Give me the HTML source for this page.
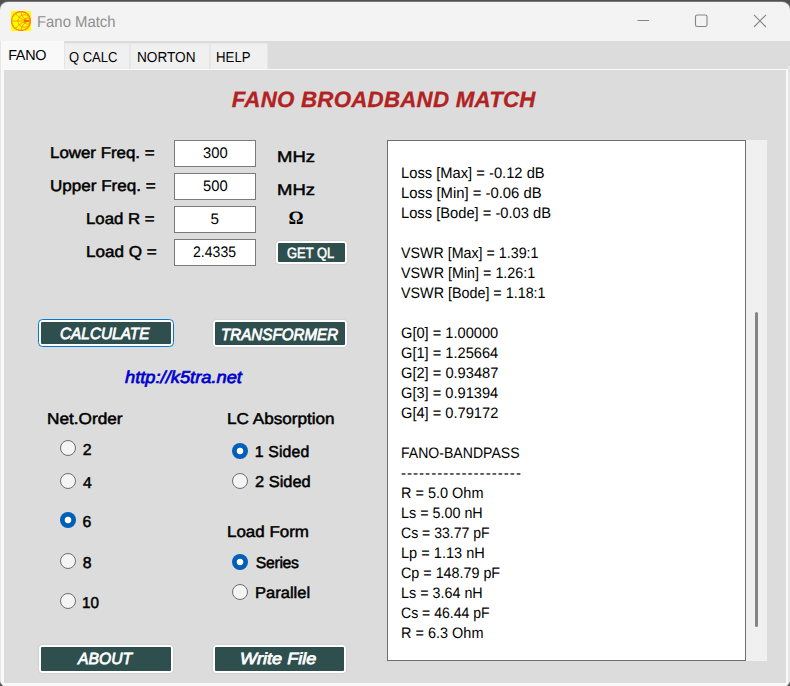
<!DOCTYPE html>
<html lang="en"><head><meta charset="utf-8"><title>Fano Match</title>
<style>
*{box-sizing:border-box;margin:0;padding:0}
html,body{width:790px;height:686px;overflow:hidden;background:#505050}
body{position:relative;font-family:"Liberation Sans",Arial,sans-serif;color:#000}
.abs{position:absolute}
.t{position:absolute;white-space:nowrap;line-height:20px;display:block;transform-origin:0 50%;text-rendering:geometricPrecision}
#clip{position:absolute;left:0;top:1.5px;width:790px;height:685.5px;border-radius:8px;background:#f3f3f3;overflow:hidden;box-shadow:0 0 0 1px #787878}
#inner{position:absolute;left:0;top:-1.5px;width:790px;height:686px}
#strip{left:0;top:41px;width:790px;height:645px;background:#dcdcdc;border-left:1px solid #e6e6e6}
#frame{left:1px;top:68.5px;width:787px;height:617.5px;background:#dcdcdc;border:solid #f9f9f9;border-width:1.5px 2px 3px 3px}
#rstrip{left:788px;top:66px;width:2px;height:620px;background:#e6e6e6}
.tab{position:absolute;top:43px;height:25.5px;background:#f0f0f0;border:1px solid #e6e6e6;border-bottom:none}
#tab0{left:0.5px;top:41px;width:63px;height:29px;background:#f9f9f9;border:none}
.inp{position:absolute;left:174px;width:82px;height:27px;background:#fff;border:1px solid #7a7a7a}
.btn{position:absolute;background:#fff;border-radius:3.5px;box-shadow:0 0 1.5px rgba(0,0,0,.22)}
.btn::after{content:'';position:absolute;left:2px;top:2px;right:2px;bottom:2px;background:#2f4f4f;border-radius:1px}
.btn.foc{border:1px solid #0078d4;border-radius:4.5px;box-shadow:none}
.rad{position:absolute;width:16px;height:16px;border-radius:50%;background:#f4f4f4;border:1px solid #6e6e6e}
.rad.on{border:none;background:radial-gradient(circle at 50% 50%,#fff 0,#fff 2.9px,#005fb8 3.7px)}
#tbox{left:387px;top:140px;width:359px;height:521px;background:#fff;border:1px solid #6e6e6e}
#sbar{left:746px;top:140px;width:21px;height:521px;background:#f0f0f0}
#thumb{left:755px;top:312px;width:3px;height:314.5px;background:#858585;border-radius:1.5px}
</style></head><body>
<div id="clip"><div id="inner">
<div id="strip" class="abs"></div>
<div id="frame" class="abs"></div>
<div id="rstrip" class="abs"></div>
<div class="tab" style="left:63.5px;width:66px"></div>
<div class="tab" style="left:129.5px;width:80px"></div>
<div class="tab" style="left:209.5px;width:58.5px"></div>
<div class="tab" id="tab0"></div>
<!-- app icon -->
<svg class="abs" style="left:11px;top:11px" width="20" height="20" viewBox="0 0 20 20">
<rect width="20" height="20" fill="#ffff00"/>
<g fill="none" stroke="#ff9000" stroke-width="1" stroke-opacity="0.9">
<circle cx="10" cy="10" r="9.5" stroke-width="1.3" stroke="#ff8a00" stroke-opacity="1"/>
<circle cx="13.2" cy="10" r="6.3"/>
<circle cx="16.3" cy="10" r="3.2"/>
<path d="M0.5 10H19.5"/>
<path d="M19.5 10A9.5 9.5 0 0 1 10 0.5"/>
<path d="M19.5 10A9.5 9.5 0 0 0 10 19.5"/>
<path d="M19.5 10A19 19 0 0 1 4.3 2.4"/>
<path d="M19.5 10A19 19 0 0 0 4.3 17.6"/>
<path d="M13.2 10H18.4" stroke="#ff5a00" stroke-width="1.7" stroke-opacity="1"/>
</g></svg>
<!-- caption buttons -->
<svg class="abs" style="left:630px;top:8px" width="150" height="26" viewBox="0 0 150 26" fill="none" stroke="#858585" stroke-width="1.1">
<path d="M7.5 12.5H19"/>
<rect x="65.5" y="7" width="11.5" height="11.5" rx="1.8"/>
<path d="M124 6.8L136 19M136 6.8L124 19"/>
</svg>
<!-- inputs -->
<div class="inp" style="top:140px"></div>
<div class="inp" style="top:173px"></div>
<div class="inp" style="top:206px"></div>
<div class="inp" style="top:239px"></div>
<!-- buttons -->
<div class="btn" style="left:276px;top:241px;width:71px;height:23px"></div>
<div class="btn foc" style="left:38px;top:319px;width:136px;height:28px"></div>
<div class="btn" style="left:213px;top:320px;width:133.5px;height:26.5px"></div>
<div class="btn" style="left:39px;top:645px;width:133.5px;height:27.5px"></div>
<div class="btn" style="left:212.5px;top:645px;width:133.7px;height:27.5px"></div>
<!-- radios -->
<div class="rad" style="left:60px;top:440px"></div>
<div class="rad" style="left:60px;top:473px"></div>
<div class="rad on" style="left:60px;top:512px"></div>
<div class="rad" style="left:60px;top:553px"></div>
<div class="rad" style="left:60px;top:593px"></div>
<div class="rad on" style="left:232px;top:443px"></div>
<div class="rad" style="left:232px;top:473px"></div>
<div class="rad on" style="left:232px;top:554px"></div>
<div class="rad" style="left:232px;top:584px"></div>
<!-- text box -->
<div id="tbox" class="abs"></div>
<div id="sbar" class="abs"></div>
<div id="thumb" class="abs"></div>
<span class="t" style='left:36.78px;top:13.00px;font-size:15.8px;color:#8f8f8f;transform:scaleX(0.9415);'>Fano Match</span>
<span class="t" style='left:8.17px;top:46.00px;font-size:14.4px;letter-spacing:-0.312px;'>FANO</span>
<span class="t" style='left:68.68px;top:48.00px;font-size:14.4px;transform:scaleX(0.9033);'>Q CALC</span>
<span class="t" style='left:137.04px;top:48.00px;font-size:14.4px;transform:scaleX(0.9459);'>NORTON</span>
<span class="t" style='left:215.55px;top:48.00px;font-size:14.4px;transform:scaleX(0.9199);'>HELP</span>
<span class="t" style='left:231.76px;top:90.00px;font-size:22.3px;-webkit-text-stroke:0.3px;font-weight:700;font-style:italic;color:#b22222;letter-spacing:0.230px;'>FANO BROADBAND MATCH</span>
<span class="t" style='left:50.08px;top:144.00px;font-size:15.8px;-webkit-text-stroke:0.5px;transform:scaleX(1.0682);'>Lower Freq. =</span>
<span class="t" style='left:50.22px;top:177.00px;font-size:15.8px;-webkit-text-stroke:0.5px;transform:scaleX(1.0797);'>Upper Freq. =</span>
<span class="t" style='left:86.13px;top:210.00px;font-size:15.8px;-webkit-text-stroke:0.5px;transform:scaleX(1.0631);'>Load R =</span>
<span class="t" style='left:85.54px;top:243.00px;font-size:15.8px;-webkit-text-stroke:0.5px;transform:scaleX(1.0807);'>Load Q =</span>
<span class="t" style='left:277.25px;top:148.00px;font-size:15.8px;-webkit-text-stroke:0.45px;transform:scaleX(1.1707);'>MHz</span>
<span class="t" style='left:277.25px;top:181.00px;font-size:15.8px;-webkit-text-stroke:0.45px;transform:scaleX(1.1707);'>MHz</span>
<span class="t" style='left:288.59px;top:209.00px;font-size:18.8px;font-weight:700;font-family:"Liberation Serif", serif;'>Ω</span>
<span class="t" style='left:202.94px;top:144.00px;font-size:15.3px;transform:scaleX(0.9651);'>300</span>
<span class="t" style='left:202.91px;top:177.00px;font-size:15.3px;transform:scaleX(0.9662);'>500</span>
<span class="t" style='left:210.58px;top:210.00px;font-size:15.3px;'>5</span>
<span class="t" style='left:193.21px;top:243.00px;font-size:15.3px;transform:scaleX(0.9206);'>2.4335</span>
<span class="t" style='left:287.19px;top:244.00px;font-size:14.8px;-webkit-text-stroke:0.55px;color:#fff;transform:scaleX(0.8741);'>GET QL</span>
<span class="t" style='left:60.11px;top:324.00px;font-size:16.2px;-webkit-text-stroke:0.75px;font-style:italic;color:#fff;transform:scaleX(0.9494);'>CALCULATE</span>
<span class="t" style='left:220.78px;top:325.00px;font-size:16.2px;-webkit-text-stroke:0.75px;font-style:italic;color:#fff;transform:scaleX(0.9368);'>TRANSFORMER</span>
<span class="t" style='left:77.97px;top:649.00px;font-size:16.2px;-webkit-text-stroke:0.75px;font-style:italic;color:#fff;transform:scaleX(0.9700);'>ABOUT</span>
<span class="t" style='left:240.36px;top:649.00px;font-size:16.2px;-webkit-text-stroke:0.75px;font-style:italic;color:#fff;transform:scaleX(1.1161);'>Write File</span>
<span class="t" style='left:125.27px;top:367.00px;font-size:17.2px;-webkit-text-stroke:0.7px;font-style:italic;color:#0000cd;transform:translateY(-0.5px) scaleX(1.0642);'>http://k5tra.net</span>
<span class="t" style='left:47.05px;top:410.00px;font-size:15.8px;-webkit-text-stroke:0.5px;transform:scaleX(1.0902);'>Net.Order</span>
<span class="t" style='left:226.67px;top:410.00px;font-size:15.8px;-webkit-text-stroke:0.5px;transform:scaleX(1.0848);'>LC Absorption</span>
<span class="t" style='left:226.79px;top:523.00px;font-size:15.8px;-webkit-text-stroke:0.5px;transform:scaleX(1.0735);'>Load Form</span>
<span class="t" style='left:82.68px;top:441.00px;font-size:15.8px;-webkit-text-stroke:0.5px;'>2</span>
<span class="t" style='left:82.89px;top:474.00px;font-size:15.8px;-webkit-text-stroke:0.5px;'>4</span>
<span class="t" style='left:82.45px;top:513.00px;font-size:15.8px;-webkit-text-stroke:0.5px;'>6</span>
<span class="t" style='left:82.69px;top:554.00px;font-size:15.8px;-webkit-text-stroke:0.5px;'>8</span>
<span class="t" style='left:82.24px;top:594.00px;font-size:15.8px;-webkit-text-stroke:0.5px;transform:scaleX(0.9626);'>10</span>
<span class="t" style='left:254.83px;top:443.00px;font-size:15.8px;-webkit-text-stroke:0.5px;letter-spacing:0.139px;'>1 Sided</span>
<span class="t" style='left:255.46px;top:473.00px;font-size:15.8px;-webkit-text-stroke:0.5px;transform:scaleX(1.0387);'>2 Sided</span>
<span class="t" style='left:255.73px;top:554.00px;font-size:15.8px;-webkit-text-stroke:0.5px;letter-spacing:-0.299px;'>Series</span>
<span class="t" style='left:255.20px;top:584.00px;font-size:15.8px;-webkit-text-stroke:0.5px;transform:scaleX(1.0453);'>Parallel</span>
<span class="t" style='left:400.90px;top:164.00px;font-size:15.2px;transform:scaleX(0.9696);'>Loss [Max] = -0.12 dB</span>
<span class="t" style='left:400.90px;top:184.00px;font-size:15.2px;transform:scaleX(0.9766);'>Loss [Min] = -0.06 dB</span>
<span class="t" style='left:400.90px;top:204.00px;font-size:15.2px;transform:scaleX(0.9686);'>Loss [Bode] = -0.03 dB</span>
<span class="t" style='left:400.90px;top:244.00px;font-size:15.2px;transform:scaleX(0.9386);'>VSWR [Max] = 1.39:1</span>
<span class="t" style='left:400.90px;top:264.00px;font-size:15.2px;transform:scaleX(0.9438);'>VSWR [Min] = 1.26:1</span>
<span class="t" style='left:400.90px;top:284.00px;font-size:15.2px;transform:scaleX(0.9434);'>VSWR [Bode] = 1.18:1</span>
<span class="t" style='left:400.90px;top:324.00px;font-size:15.2px;transform:scaleX(0.9638);'>G[0] = 1.00000</span>
<span class="t" style='left:400.90px;top:344.00px;font-size:15.2px;transform:scaleX(0.9633);'>G[1] = 1.25664</span>
<span class="t" style='left:400.90px;top:364.00px;font-size:15.2px;transform:scaleX(0.9647);'>G[2] = 0.93487</span>
<span class="t" style='left:400.90px;top:384.00px;font-size:15.2px;transform:scaleX(0.9633);'>G[3] = 0.91394</span>
<span class="t" style='left:400.90px;top:404.00px;font-size:15.2px;transform:scaleX(0.9640);'>G[4] = 0.79172</span>
<span class="t" style='left:400.90px;top:444.00px;font-size:15.2px;transform:scaleX(0.9261);'>FANO-BANDPASS</span>
<span class="t" style='left:400.90px;top:464.00px;font-size:15.2px;letter-spacing:0.997px;'>--------------------</span>
<span class="t" style='left:400.90px;top:484.00px;font-size:15.2px;transform:scaleX(0.9528);'>R = 5.0 Ohm</span>
<span class="t" style='left:400.90px;top:504.00px;font-size:15.2px;transform:scaleX(0.9444);'>Ls = 5.00 nH</span>
<span class="t" style='left:400.90px;top:524.00px;font-size:15.2px;transform:scaleX(0.9252);'>Cs = 33.77 pF</span>
<span class="t" style='left:400.90px;top:544.00px;font-size:15.2px;transform:scaleX(0.9593);'>Lp = 1.13 nH</span>
<span class="t" style='left:400.90px;top:564.00px;font-size:15.2px;transform:scaleX(0.9429);'>Cp = 148.79 pF</span>
<span class="t" style='left:400.90px;top:584.00px;font-size:15.2px;transform:scaleX(0.9444);'>Ls = 3.64 nH</span>
<span class="t" style='left:400.90px;top:604.00px;font-size:15.2px;transform:scaleX(0.9252);'>Cs = 46.44 pF</span>
<span class="t" style='left:400.90px;top:624.00px;font-size:15.2px;transform:scaleX(0.9528);'>R = 6.3 Ohm</span>
</div></div>
</body></html>
